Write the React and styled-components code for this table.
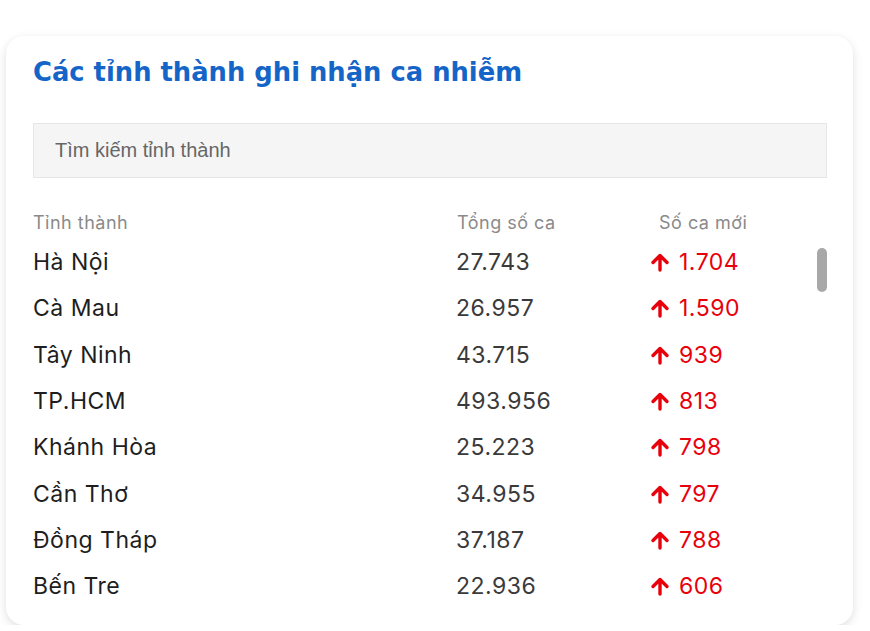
import React from 'react';
import styled, { createGlobalStyle } from 'styled-components';

const rows = [
  { name: 'Hà Nội', total: '27.743', today: '1.704' },
  { name: 'Cà Mau', total: '26.957', today: '1.590' },
  { name: 'Tây Ninh', total: '43.715', today: '939' },
  { name: 'TP.HCM', total: '493.956', today: '813' },
  { name: 'Khánh Hòa', total: '25.223', today: '798' },
  { name: 'Cần Thơ', total: '34.955', today: '797' },
  { name: 'Đồng Tháp', total: '37.187', today: '788' },
  { name: 'Bến Tre', total: '22.936', today: '606' },
];

const ArrowUp = () => (
  <svg width="20" height="20" viewBox="0 0 20 20" fill="none">
    <path d="M10 18V3.5M3 10.5L10 3.5l7 7" stroke="currentColor" strokeWidth="3.4" strokeLinecap="round" strokeLinejoin="round" />
  </svg>
);

class App extends React.Component {
  render() {
    return (
      <>
        <GlobalStyle />
        <Card>
          <Title>Các tỉnh thành ghi nhận ca nhiễm</Title>
          <SearchInput placeholder="Tìm kiếm tỉnh thành" />
          <HeadRow>
            <Cell>Tỉnh thành</Cell>
            <Cell>Tổng số ca</Cell>
            <Cell>Số ca mới</Cell>
          </HeadRow>
          <ScrollArea>
            {rows.map((r) => (
              <Row key={r.name}>
                <NameCell>{r.name}</NameCell>
                <TotalCell>{r.total}</TotalCell>
                <NewCell>
                  <ArrowUp />
                  {r.today}
                </NewCell>
              </Row>
            ))}
            <Thumb />
          </ScrollArea>
        </Card>
      </>
    );
  }
}

const GlobalStyle = createGlobalStyle`
  body {
    margin: 0;
    background: #ffffff;
    font-family: Inter, "Noto Sans", sans-serif;
  }
`;

const Card = styled.div`
  margin: 36px 0 0 6px;
  width: 847px;
  height: 589px;
  box-sizing: border-box;
  padding: 19px 26px 0 27px;
  background: #fff;
  border-radius: 18px;
  box-shadow: 0 3px 10px rgba(0, 0, 0, 0.13);
  overflow: hidden;
`;

const Title = styled.h2`
  margin: 0;
  font-family: "DejaVu Sans", Inter, sans-serif;
  font-size: 25.8px;
  font-weight: 700;
  line-height: 34px;
  color: #1565c8;
`;

const SearchInput = styled.input`
  display: block;
  width: 100%;
  height: 55px;
  margin-top: 34px;
  box-sizing: border-box;
  padding: 0 21px;
  background: #f5f5f5;
  border: 1px solid #e6e6e6;
  font-family: "Liberation Sans", Arial, sans-serif;
  font-size: 20px;
  outline: none;
  &::placeholder {
    color: #666;
  }
`;

const HeadRow = styled.div`
  display: grid;
  grid-template-columns: 424px 202px 1fr;
  margin-top: 33px;
  font-size: 18px;
  letter-spacing: 0.5px;
  line-height: 24px;
  color: #8a8a8a;
`;

const Cell = styled.div``;

const ScrollArea = styled.div`
  position: relative;
  margin-top: 4px;
  height: 372px;
  overflow: hidden;
`;

const Row = styled.div`
  display: grid;
  grid-template-columns: 423px 194px 1fr;
  height: 46.3px;
  align-items: center;
  font-size: 23px;
  letter-spacing: 0.5px;
`;

const NameCell = styled.div`
  color: #1e1e1e;
`;

const TotalCell = styled.div`
  color: #3a3a3a;
`;

const NewCell = styled.div`
  display: flex;
  align-items: center;
  gap: 9px;
  color: #e8000b;
`;

const Thumb = styled.div`
  position: absolute;
  right: 0;
  top: 9px;
  width: 10px;
  height: 44px;
  border-radius: 5px;
  background: #a8a8a8;
`;

export default App;
